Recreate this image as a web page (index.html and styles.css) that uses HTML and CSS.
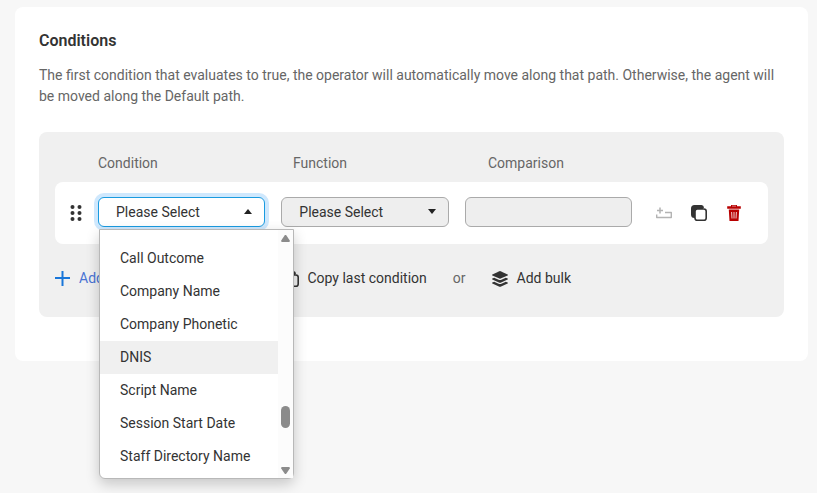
FILE: index.html
```html
<!DOCTYPE html>
<html lang="en">
<head>
    <meta charset="UTF-8">
    <meta name="viewport" content="width=device-width, initial-scale=1.0">
    <title>Conditions</title>
    <link rel="stylesheet" href="styles.css">
</head>
<body>
    <svg class="sprite" aria-hidden="true">
        <symbol id="icon-copy" viewBox="0 0 16 16">
            <path fill="#333" d="M3.5 0h7A3 3 0 0 1 13 2.6L4 13H3.5A3.5 3.5 0 0 1 0 9.500V3.500A3.500 3.500 0 0 1 3.500 0z"/>
            <rect x="4" y="4" width="11.200" height="11.200" rx="2.300" fill="var(--hole)" stroke="#333" stroke-width="1.600"/>
        </symbol>
    </svg>

    <main class="card">
        <h1>Conditions</h1>
        <p class="intro">The first condition that evaluates to true, the operator will automatically move along that path. Otherwise, the agent will be moved along the Default path.</p>

        <section class="panel">
            <div class="headings">
                <label for="condition">Condition</label>
                <label for="function">Function</label>
                <label for="comparison">Comparison</label>
            </div>

            <div class="row">
                <button type="button" class="icon-btn handle" aria-label="Reorder">
                    <svg width="12" height="16" viewBox="0 0 12 16" fill="#333">
                        <circle cx="2.500" cy="2" r="2"/><circle cx="9.500" cy="2" r="2"/>
                        <circle cx="2.500" cy="8" r="2"/><circle cx="9.500" cy="8" r="2"/>
                        <circle cx="2.500" cy="14" r="2"/><circle cx="9.500" cy="14" r="2"/>
                    </svg>
                </button>

                <div class="fields">
                    <div class="field open">
                        <select id="condition">
                            <option>Please Select</option>
                        </select>
                        <div class="menu">
                            <ul class="options" role="listbox" aria-label="Condition">
                                <li role="option">Call Outcome</li>
                                <li role="option">Company Name</li>
                                <li role="option">Company Phonetic</li>
                                <li role="option" class="active">DNIS</li>
                                <li role="option">Script Name</li>
                                <li role="option">Session Start Date</li>
                                <li role="option">Staff Directory Name</li>
                            </ul>
                            <div class="scrollbar">
                                <svg width="9" height="7" viewBox="0 0 9 7"><path fill="#8b8b8b" d="M3.600.5a1.100 1.100 0 0 1 1.800 0l3.400 5Q9 7 8 7H1Q0 7 .2 5.500z"/></svg>
                                <div class="thumb"></div>
                                <svg width="9" height="7" viewBox="0 0 9 7"><path fill="#8b8b8b" d="M3.600 6.500a1.100 1.100 0 0 0 1.800 0l3.400-5Q9 0 8 0H1Q0 0 .2 1.500z"/></svg>
                            </div>
                        </div>
                    </div>
                    <div class="field">
                        <select id="function">
                            <option>Please Select</option>
                        </select>
                    </div>
                    <div class="field">
                        <input type="text" id="comparison">
                    </div>
                </div>

                <div class="tools">
                    <button type="button" class="icon-btn" aria-label="Insert below" disabled>
                        <svg width="16" height="16" viewBox="0 0 16 16" fill="none" stroke="#b3b3b3">
                            <path stroke-width="1.500" d="M4 2.500v6M1 5.500h6"/>
                            <path stroke-width="1.400" stroke-linejoin="round" d="M9 7.500h6.300v5H.7V9.500"/>
                        </svg>
                    </button>
                    <button type="button" class="icon-btn" aria-label="Duplicate">
                        <svg width="16" height="16"><use href="#icon-copy"/></svg>
                    </button>
                    <button type="button" class="icon-btn" aria-label="Delete">
                        <svg width="16" height="16" viewBox="0 0 16 16">
                            <path fill="#b80000" d="M5 0h6v1.300h3.800v2.500H1.200V1.300H5z"/>
                            <path stroke="#fff" stroke-width=".5" d="M6 1.100h4"/>
                            <path fill="#b80000" d="M2.800 4.600h10.400L12.500 16h-9z"/>
                            <path stroke="#fff" stroke-width=".8" fill="none" d="M5.600 7l.4 6.500M8 7v6.500M10.400 7l-.4 6.500"/>
                        </svg>
                    </button>
                </div>
            </div>

            <div class="actions">
                <button type="button" class="action primary">
                    <svg width="16" height="16" viewBox="0 0 16 16" fill="none" stroke="#1976d9" stroke-width="2"><path d="M7.500 0v15M0 7h15"/></svg>
                    Add another condition
                </button>
                <span>or</span>
                <button type="button" class="action">
                    <svg width="16" height="16"><use href="#icon-copy"/></svg>
                    Copy last condition
                </button>
                <span>or</span>
                <button type="button" class="action">
                    <svg width="17" height="16" viewBox="0 0 17 16" fill="#333">
                        <path d="M7.400.2Q8 0 8.600.2l7 3.200q.8.500 0 1l-7 3.200q-.6.200-1.200 0l-7-3.200q-.8-.5 0-1z"/>
                        <path d="M.4 7.500l1.800-.8 4.900 2.200q.9.400 1.800 0l4.900-2.200 1.800.8q.8.500 0 1l-7 3.200q-.6.200-1.200 0l-7-3.200q-.8-.5 0-1z"/>
                        <path d="M.4 11.500l1.800-.8 4.900 2.200q.9.400 1.800 0l4.900-2.200 1.800.8q.8.500 0 1l-7 3.200q-.6.200-1.200 0l-7-3.200q-.8-.5 0-1z"/>
                    </svg>
                    Add bulk
                </button>
            </div>
        </section>
    </main>
</body>
</html>
```
FILE: styles.css
```css
* {
    box-sizing: border-box;
}

body {
    min-height: 100vh;
    margin: 0;
    padding: 7px 9px 7px 15px;
    background-color: #f7f7f7;
    color: #333;
    font-family: Roboto, sans-serif;
    font-size: 14px;
    line-height: 21px;
}

button,
input,
select {
    color: inherit;
    font: inherit;
}

.sprite {
    display: none;
}

.card {
    padding: 24px 24px 44px;
    background-color: #fff;
    border-radius: 8px;
}

h1 {
    margin: 0 0 14px;
    font-size: 16px;
    font-weight: 600;
    line-height: 20px;
}

.intro {
    margin: 0 0 25px;
    color: #666;
}

.panel {
    padding: 21px 16px 28px;
    background-color: #f0f0f0;
    border-radius: 8px;
}

.headings {
    display: grid;
    grid-template-columns: repeat(3, 1fr);
    margin-bottom: 8px;
    padding: 0 85px 0 43px;
    color: #666;
}

.row {
    display: flex;
    align-items: center;
    padding: 15px 26px 17px 15px;
    background-color: #fff;
    border-radius: 8px;
}

.icon-btn {
    display: flex;
    padding: 2px 0 0;
    border: none;
    background: none;
    cursor: pointer;
}

.handle {
    margin-right: 16px;
    cursor: grab;
}

.fields {
    display: grid;
    flex: 1;
    grid-template-columns: repeat(3, 1fr);
    gap: 16px;
}

.field {
    position: relative;
}

.field select,
.field input {
    display: block;
    width: 100%;
    height: 30px;
    padding: 0 17px;
    border: 1px solid #aaa;
    border-radius: 6px;
    outline: none;
    background-color: #eee;
}

.field select {
    appearance: none;
}

.field:has(select)::after {
    content: '';
    position: absolute;
    top: 12px;
    right: 13px;
    border: 4px solid transparent;
    border-top: 5px solid #222;
    border-bottom: none;
    pointer-events: none;
}

.field.open select {
    border-color: #1a9be0;
    background-color: #fff;
    box-shadow: 0 0 0 4px #cfe8fd;
}

.field.open:has(select)::after {
    border-top: none;
    border-bottom: 5px solid #222;
}

.menu {
    position: absolute;
    top: 32px;
    left: 1px;
    z-index: 1;
    display: flex;
    width: 195px;
    border: 1px solid #b8b8b8;
    border-radius: 0 0 6px 6px;
    background-color: #fff;
    box-shadow: 0 5px 14px rgba(0, 0, 0, 0.2);
}

.options {
    flex: 1;
    margin: 0;
    padding: 12px 0 5px;
    list-style: none;
}

.options li {
    padding: 6px 0 6px 20px;
    white-space: nowrap;
}

.options .active {
    background-color: #f0f0f0;
}

.scrollbar {
    display: flex;
    flex-direction: column;
    align-items: center;
    width: 15px;
    padding: 5px 0 4px;
    background-color: #fcfcfc;
}

.thumb {
    width: 9px;
    height: 22px;
    margin: auto 0 39px;
    border-radius: 5px;
    background-color: #8b8b8b;
}

.tools {
    display: flex;
    gap: 19px;
    margin-left: 24px;
}

.actions {
    display: flex;
    align-items: center;
    gap: 26px;
    margin-top: 24px;
    color: #666;
}

.action {
    display: flex;
    align-items: center;
    gap: 8px;
    padding: 0;
    border: none;
    background: none;
    color: #333;
    white-space: nowrap;
    cursor: pointer;
}

.action.primary {
    margin-right: 2px;
    color: #4a74d4;
}

.tools svg {
    --hole: #fff;
}

.actions svg {
    --hole: #f0f0f0;
}
```
